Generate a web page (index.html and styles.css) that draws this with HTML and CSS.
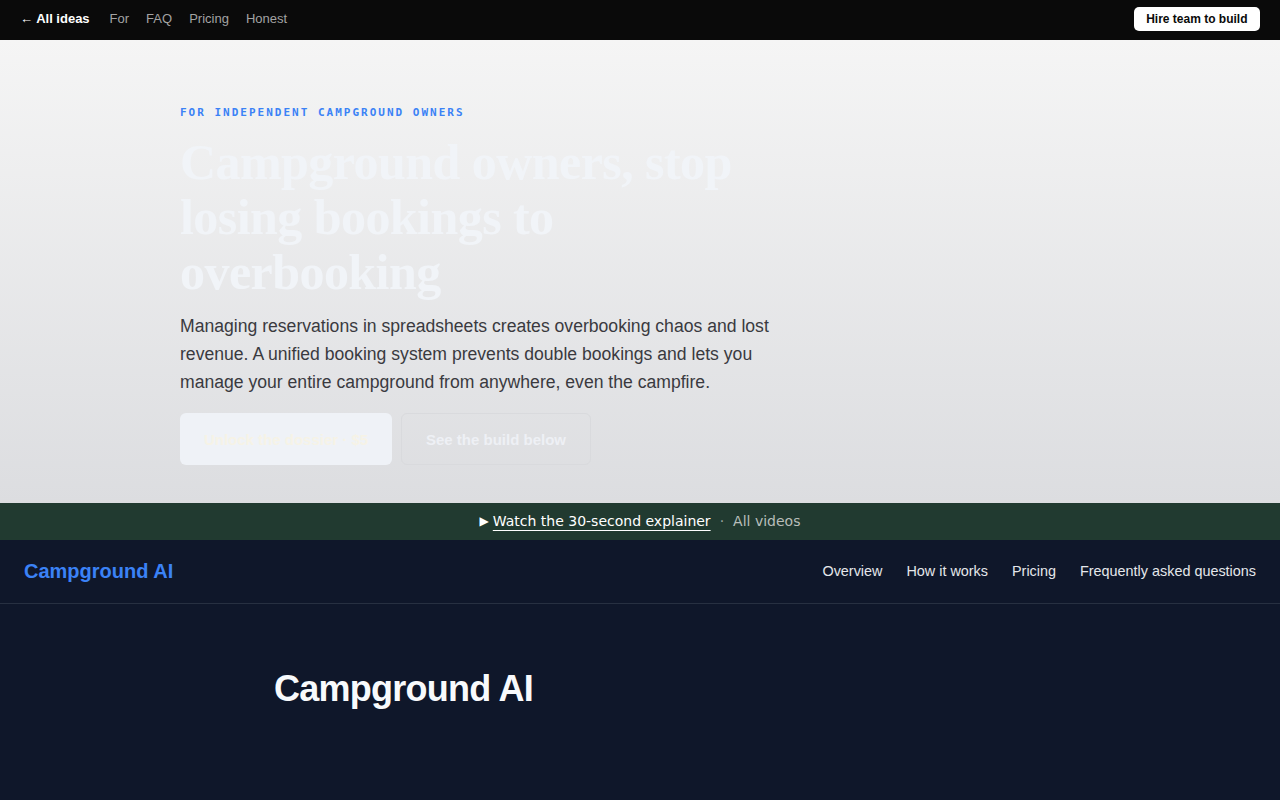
FILE: index.html
```html
<!DOCTYPE html>
<html lang="en">
<head>
<meta charset="utf-8">
<title>Campground AI</title>
<link rel="stylesheet" href="styles.css">
</head>
<body>
<header class="topbar">
  <nav class="topnav">
    <a class="back" href="#">← All ideas</a>
    <a href="#">For</a>
    <a href="#">FAQ</a>
    <a href="#">Pricing</a>
    <a href="#">Honest</a>
  </nav>
  <a class="hire" href="#">Hire team to build</a>
</header>

<section class="hero">
  <div class="hero-inner">
    <p class="eyebrow">FOR INDEPENDENT CAMPGROUND OWNERS</p>
    <h1 class="headline">Campground owners, stop losing bookings to overbooking</h1>
    <p class="lead">Managing reservations in spreadsheets creates overbooking chaos and lost revenue. A unified booking system prevents double bookings and lets you manage your entire campground from anywhere, even the campfire.</p>
    <div class="actions">
      <a class="btn btn-primary" href="#">Unlock the dossier · $5</a>
      <a class="btn btn-ghost" href="#">See the build below</a>
    </div>
  </div>
</section>

<div class="videobar">
  <span class="play">▶</span>
  <a class="watch" href="#">Watch the 30-second explainer</a>
  <span class="dot">·</span>
  <a class="allvid" href="#">All videos</a>
</div>

<section class="app">
  <header class="appnav">
    <a class="brand" href="#">Campground AI</a>
    <nav class="applinks">
      <a href="#">Overview</a>
      <a href="#">How it works</a>
      <a href="#">Pricing</a>
      <a href="#">Frequently asked questions</a>
    </nav>
  </header>
  <div class="app-hero">
    <h2 class="app-title">Campground AI</h2>
  </div>
</section>
</body>
</html>
```

FILE: styles.css
```css
* { box-sizing: border-box; }
html, body { margin: 0; padding: 0; }
body {
  font-family: "Liberation Sans", Arial, sans-serif;
  background: #0f172a;
  overflow: hidden;
}
a { text-decoration: none; color: inherit; }

.topbar {
  height: 40px;
  background: #0a0a0a;
  display: flex;
  align-items: center;
  justify-content: space-between;
  padding: 0 20px 3px;
}
.topnav {
  display: flex;
  align-items: center;
  gap: 17px;
  font-size: 13px;
  color: #a3a3a3;
}
.topnav .back {
  color: #ffffff;
  font-weight: 700;
  margin-right: 3px;
}
.hire {
  background: #ffffff;
  color: #0a0a0a;
  font-weight: 700;
  font-size: 12px;
  height: 24px;
  line-height: 24px;
  padding: 0 12.5px;
  border-radius: 5px;
  margin-top: 1px;
}

.hero {
  height: 463px;
  background: linear-gradient(180deg, #f5f5f5 0%, #dcdde0 100%);
  padding-top: 66px;
}
.hero-inner {
  margin-left: 180px;
  width: 640px;
}
.eyebrow {
  margin: 0;
  font-family: "DejaVu Sans Mono", "Liberation Mono", monospace;
  font-size: 11px;
  font-weight: 700;
  letter-spacing: 2.0px;
  color: #3b82f6;
  line-height: 14px;
}
.headline {
  margin: 15px 0 0;
  font-family: "Liberation Serif", "Times New Roman", serif;
  font-size: 50px;
  line-height: 55px;
  font-weight: 700;
  color: #f1f4f8;
  letter-spacing: -0.55px;
  width: 600px;
}
.lead {
  margin: 13px 0 0;
  font-size: 17.6px;
  line-height: 27.8px;
  color: #3a3a3f;
  width: 610px;
}
.actions {
  display: flex;
  gap: 9px;
  margin-top: 17px;
}
.btn {
  height: 52px;
  display: inline-flex;
  align-items: center;
  justify-content: center;
  font-size: 15px;
  font-weight: 700;
  border-radius: 6px;
}
.btn-primary {
  width: 212px;
  background: #eff2f7;
  color: #f6f3e6;
}
.btn-ghost {
  width: 190px;
  border: 1px solid #d9dadd;
  color: #eef0f5;
}

.videobar {
  height: 37px;
  background: #213a30;
  display: flex;
  align-items: center;
  justify-content: center;
  font-family: "DejaVu Sans", sans-serif;
  font-size: 14px;
  color: #ffffff;
  padding-bottom: 2px;
}
.play { font-size: 12px; margin-right: 4px; }
.watch {
  text-decoration: underline;
  text-underline-offset: 4px;
  color: #ffffff;
}
.dot { color: #9ca3a0; margin: 0 9px; }
.allvid { color: #b8beba; }

.app { background: #0f172a; }
.appnav {
  height: 64px;
  display: flex;
  align-items: center;
  justify-content: space-between;
  padding: 0 24px 1px;
  border-bottom: 1px solid #273041;
}
.brand {
  color: #3b82f6;
  font-size: 20px;
  font-weight: 700;
  margin-top: 1px;
}
.applinks {
  display: flex;
  gap: 24px;
  font-size: 14.4px;
  color: #e5e7eb;
}
.app-hero {
  padding: 63px 0 0 274px;
}
.app-title {
  margin: 0;
  color: #f8fafc;
  font-size: 36px;
  font-weight: 700;
  line-height: 44px;
  letter-spacing: -0.75px;
}
```
